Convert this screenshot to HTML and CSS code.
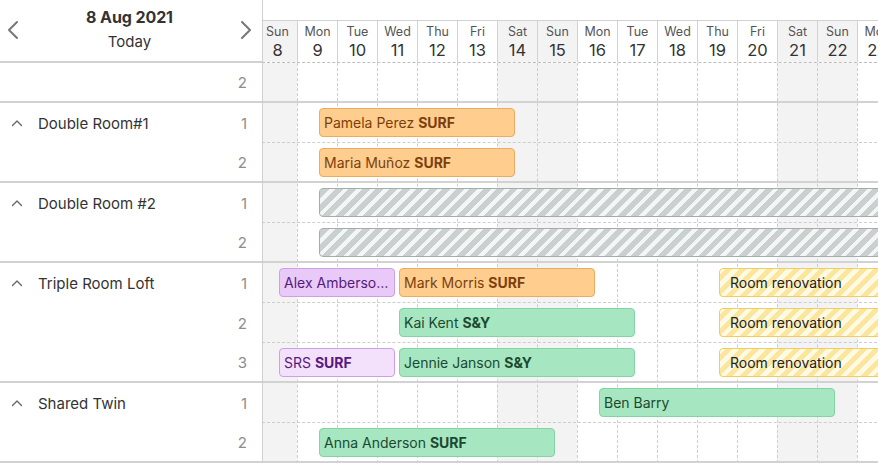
FILE: index.html
```html
<!DOCTYPE html>
<html>
<head>
    <meta charset="utf-8">
    <link rel="stylesheet" href="styles.css">
</head>
<body>
    <div class="scheduler">
        <div class="side">
            <div class="side-head">
                <span class="nav">
                    <svg width="12" height="20" viewBox="0 0 12 20"><path d="M10 2 L2 10 L10 18" fill="none" stroke="#777" stroke-width="2" stroke-linecap="round" stroke-linejoin="round"/></svg>
                </span>
                <div class="title">
                    <div class="date">8 Aug 2021</div>
                    <div class="today">Today</div>
                </div>
                <span class="nav">
                    <svg width="12" height="20" viewBox="0 0 12 20"><path d="M2 2 L10 10 L2 18" fill="none" stroke="#777" stroke-width="2" stroke-linecap="round" stroke-linejoin="round"/></svg>
                </span>
            </div>

            <div class="group">
                <div class="res"><span class="name"></span><span class="num">2</span></div>
            </div>
            <div class="group">
                <div class="res"><span class="caret"><svg width="12" height="8" viewBox="0 0 12 8"><path d="M1.5 6.5 L6 2 L10.5 6.5" fill="none" stroke="#666" stroke-width="1.4" stroke-linecap="round" stroke-linejoin="round"/></svg></span><span class="name">Double Room#1</span><span class="num">1</span></div>
                <div class="res"><span class="name"></span><span class="num">2</span></div>
            </div>
            <div class="group">
                <div class="res"><span class="caret"><svg width="12" height="8" viewBox="0 0 12 8"><path d="M1.5 6.5 L6 2 L10.5 6.5" fill="none" stroke="#666" stroke-width="1.4" stroke-linecap="round" stroke-linejoin="round"/></svg></span><span class="name">Double Room #2</span><span class="num">1</span></div>
                <div class="res"><span class="name"></span><span class="num">2</span></div>
            </div>
            <div class="group">
                <div class="res"><span class="caret"><svg width="12" height="8" viewBox="0 0 12 8"><path d="M1.5 6.5 L6 2 L10.5 6.5" fill="none" stroke="#666" stroke-width="1.4" stroke-linecap="round" stroke-linejoin="round"/></svg></span><span class="name">Triple Room Loft</span><span class="num">1</span></div>
                <div class="res"><span class="name"></span><span class="num">2</span></div>
                <div class="res"><span class="name"></span><span class="num">3</span></div>
            </div>
            <div class="group">
                <div class="res"><span class="caret"><svg width="12" height="8" viewBox="0 0 12 8"><path d="M1.5 6.5 L6 2 L10.5 6.5" fill="none" stroke="#666" stroke-width="1.4" stroke-linecap="round" stroke-linejoin="round"/></svg></span><span class="name">Shared Twin</span><span class="num">1</span></div>
                <div class="res"><span class="name"></span><span class="num">2</span></div>
            </div>
        </div>

        <div class="timeline">
            <div class="track">
                <div class="month"></div>
                <div class="days">
                    <div class="day weekend"><span class="dow">Sun</span><span class="dnum">8</span></div>
                    <div class="day"><span class="dow">Mon</span><span class="dnum">9</span></div>
                    <div class="day"><span class="dow">Tue</span><span class="dnum">10</span></div>
                    <div class="day"><span class="dow">Wed</span><span class="dnum">11</span></div>
                    <div class="day"><span class="dow">Thu</span><span class="dnum">12</span></div>
                    <div class="day"><span class="dow">Fri</span><span class="dnum">13</span></div>
                    <div class="day weekend"><span class="dow">Sat</span><span class="dnum">14</span></div>
                    <div class="day weekend"><span class="dow">Sun</span><span class="dnum">15</span></div>
                    <div class="day"><span class="dow">Mon</span><span class="dnum">16</span></div>
                    <div class="day"><span class="dow">Tue</span><span class="dnum">17</span></div>
                    <div class="day"><span class="dow">Wed</span><span class="dnum">18</span></div>
                    <div class="day"><span class="dow">Thu</span><span class="dnum">19</span></div>
                    <div class="day"><span class="dow">Fri</span><span class="dnum">20</span></div>
                    <div class="day weekend"><span class="dow">Sat</span><span class="dnum">21</span></div>
                    <div class="day weekend"><span class="dow">Sun</span><span class="dnum">22</span></div>
                    <div class="day"><span class="dow">Mon</span><span class="dnum">23</span></div>
                </div>

                <div class="body">
                    <div class="cols">
                        <div class="col weekend"></div><div class="col"></div><div class="col"></div><div class="col"></div>
                        <div class="col"></div><div class="col"></div><div class="col weekend"></div><div class="col weekend"></div>
                        <div class="col"></div><div class="col"></div><div class="col"></div><div class="col"></div>
                        <div class="col"></div><div class="col weekend"></div><div class="col weekend"></div><div class="col"></div>
                    </div>

                    <div class="tgroup">
                        <div class="trow"></div>
                    </div>
                    <div class="tgroup">
                        <div class="trow">
                            <div class="ev surf" style="grid-column: 4 / 14">Pamela Perez <b>SURF</b></div>
                        </div>
                        <div class="trow">
                            <div class="ev surf" style="grid-column: 4 / 14">Maria Muñoz <b>SURF</b></div>
                        </div>
                    </div>
                    <div class="tgroup">
                        <div class="trow">
                            <div class="ev blocked" style="grid-column: 4 / 33"></div>
                        </div>
                        <div class="trow">
                            <div class="ev blocked" style="grid-column: 4 / 33"></div>
                        </div>
                    </div>
                    <div class="tgroup">
                        <div class="trow">
                            <div class="ev promo" style="grid-column: 2 / 8"><span class="clip">Alex Amberson <b>SURF</b></span></div>
                            <div class="ev surf" style="grid-column: 8 / 18">Mark Morris <b>SURF</b></div>
                            <div class="ev reno" style="grid-column: 24 / 33">Room renovation</div>
                        </div>
                        <div class="trow">
                            <div class="ev sy" style="grid-column: 8 / 20">Kai Kent <b>S&amp;Y</b></div>
                            <div class="ev reno" style="grid-column: 24 / 33">Room renovation</div>
                        </div>
                        <div class="trow">
                            <div class="ev promo light" style="grid-column: 2 / 8">SRS <b>SURF</b></div>
                            <div class="ev sy" style="grid-column: 8 / 20">Jennie Janson <b>S&amp;Y</b></div>
                            <div class="ev reno" style="grid-column: 24 / 33">Room renovation</div>
                        </div>
                    </div>
                    <div class="tgroup">
                        <div class="trow">
                            <div class="ev sy" style="grid-column: 18 / 30">Ben Barry</div>
                        </div>
                        <div class="trow">
                            <div class="ev sy" style="grid-column: 4 / 16">Anna Anderson <b>SURF</b></div>
                        </div>
                    </div>
                </div>
            </div>
        </div>
    </div>
</body>
</html>
```

FILE: styles.css
```css
* {
    box-sizing: border-box;
}

body {
    margin: 0;
    font-family: Inter, "Liberation Sans", sans-serif;
    color: #333;
    background-color: #fff;
    overflow: hidden;
}

.scheduler {
    display: flex;
    width: 878px;
    height: 463px;
    overflow: hidden;
}

/* left resource column */

.side {
    width: 263px;
    flex-shrink: 0;
    border-right: 1px solid #cfcfcf;
}

.side-head {
    height: 63px;
    display: flex;
    align-items: center;
    justify-content: space-between;
    padding: 0 10px 2px 7px;
    border-bottom: 2px solid #d2d2d2;
}

.nav {
    display: flex;
    width: 12px;
    height: 20px;
}

.title {
    text-align: center;
    margin-top: -1px;
}

.date {
    font-size: 16px;
    font-weight: 700;
    letter-spacing: -0.1px;
}

.today {
    font-size: 15px;
    margin-top: 5px;
}

.group {
    border-bottom: 2px solid #d2d2d2;
}

.res {
    height: 40px;
    display: flex;
    align-items: center;
    padding: 0 15px 0 11px;
    font-size: 15px;
}

.group .res:last-child {
    height: 38px;
}

.caret {
    display: flex;
    width: 12px;
    margin-right: 15px;
}

.name {
    flex: 1;
}

.num {
    color: #8d8d8d;
}

/* timeline */

.timeline {
    flex: 1;
    overflow: hidden;
}

.track {
    width: 640px;
    margin-left: -6px;
}

.month {
    height: 21px;
    border-bottom: 1px solid #d2d2d2;
}

.days {
    display: flex;
    height: 42px;
    border-bottom: 1px dashed #bdbdbd;
}

.day {
    width: 40px;
    display: flex;
    flex-direction: column;
    align-items: center;
    border-left: 1px solid #d2d2d2;
    padding-top: 3px;
    overflow: hidden;
}

.dow {
    font-size: 12.5px;
    color: #555;
}

.dnum {
    font-size: 16.5px;
    margin-top: 1px;
}

.weekend {
    background-color: #f3f3f3;
}

.body {
    position: relative;
}

.cols {
    position: absolute;
    top: 0;
    left: 0;
    bottom: 0;
    display: flex;
}

.col {
    width: 40px;
    border-left: 1px dashed #cdcdcd;
}

.tgroup {
    position: relative;
    border-bottom: 2px solid #d2d2d2;
}

.trow {
    height: 40px;
    display: grid;
    grid-template-columns: repeat(32, 20px);
    align-items: center;
    border-bottom: 1px dashed #cdcdcd;
}

.tgroup .trow:last-child {
    height: 38px;
    border-bottom: none;
}

.ev {
    height: 29px;
    margin: 0 2px;
    padding: 0 4px;
    border: 1px solid;
    border-radius: 4px;
    font-size: 14px;
    line-height: 27px;
    white-space: nowrap;
    overflow: hidden;
    text-overflow: ellipsis;
}

.clip {
    display: block;
    overflow: hidden;
    text-overflow: ellipsis;
}

.surf {
    background-color: #ffcd8e;
    border-color: #eaac62;
    color: #7c3f0c;
}

.promo {
    background-color: #e9c9f7;
    border-color: #cf9fe6;
    color: #56197f;
}

.promo.light {
    background-color: #f3e1fb;
}

.sy {
    background-color: #a6e6c0;
    border-color: #84d3a4;
    color: #1b4a30;
}

.blocked {
    background: repeating-linear-gradient(-45deg, #cad0d0 0 5.5px, #f4f6f6 5.5px 9.5px);
    border-color: #a5acac;
}

.reno {
    background: repeating-linear-gradient(-45deg, #fce69e 0 5px, #fffae4 5px 9.5px);
    border-color: #f0cd5c;
    color: #222;
    padding-left: 10px;
}
```
